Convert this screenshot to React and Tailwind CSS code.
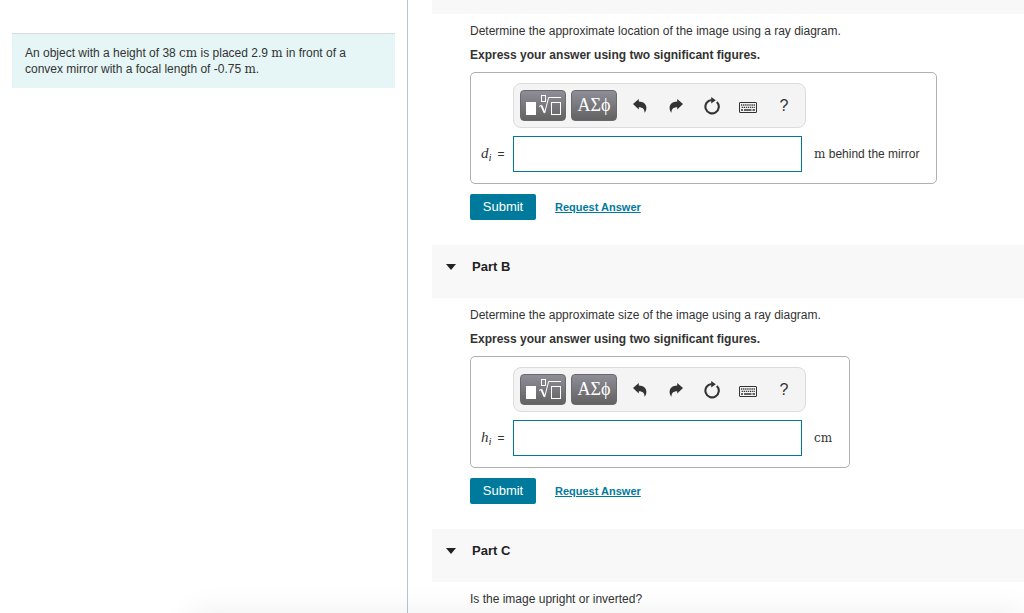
import React from "react";

function Unit({ children }) {
  return <span className="font-['DejaVu_Serif',serif] text-xs leading-none">{children}</span>;
}

function TemplateIcon() {
  return (
    <svg viewBox="0 0 36 22" className="h-[22px] w-9 shrink-0" fill="none" aria-hidden="true">
      <rect x="1" y="8" width="10" height="13" fill="#fff" />
      <rect x="16.5" y="1.5" width="4" height="6" stroke="#fff" />
      <path d="M14 12.5l2.5-1.2" stroke="#fff" />
      <path d="M16.3 11.3l3.2 7.4" stroke="#fff" strokeWidth="1.9" />
      <path d="M19.6 19.2l4-15.700H36" stroke="#fff" />
      <rect x="26.5" y="8.5" width="9" height="12" stroke="#fff" />
    </svg>
  );
}

function ArrowIcon({ flip }) {
  return (
    <svg
      viewBox="0 0 14 14"
      className={flip ? "h-3.5 w-3.5 -scale-x-100" : "h-3.5 w-3.5"}
      fill="#333"
      aria-hidden="true"
    >
      <path d="M0 5L5.8 0v2.4C10.4 2.5 13.4 5 13.4 8.8c0 1.9-.6 3.6-1.9 5 .2-3.7-1.5-5.5-5.7-5.6V10.5z" />
    </svg>
  );
}

function ResetIcon() {
  return (
    <svg viewBox="0 0 18 18" className="h-[18px] w-[18px]" fill="none" aria-hidden="true">
      <path d="M13.8 4.9A6.7 6.7 0 1 1 8.6 3" stroke="#333" strokeWidth="2.1" />
      <path d="M8.2 0l4.6 3.2-4.600 3.200z" fill="#333" />
    </svg>
  );
}

function KeyboardIcon() {
  return (
    <svg viewBox="0 0 18 11" className="h-[11px] w-[18px]" fill="none" aria-hidden="true">
      <rect x="0.5" y="0.5" width="17" height="10" rx="0.5" stroke="#333" />
      <path d="M2 3h14" stroke="#333" strokeWidth="1.4" strokeDasharray="1.3 0.8" />
      <path d="M2.6 5.4h13.4" stroke="#333" strokeWidth="1.4" strokeDasharray="1.3 0.8" />
      <path d="M2 8h2M5 8h7.5M13.5 8h2.5" stroke="#333" strokeWidth="1.4" />
    </svg>
  );
}

const DARK_BUTTON =
  "flex h-[31px] w-[46px] items-center justify-center rounded border border-[#6a6a6e] bg-linear-to-b from-[#8f8e98] to-[#626262] pb-0.5 text-white";
const TOOL_BUTTON = "flex h-8 w-9 items-center justify-center text-[#333]";

function Toolbar() {
  return (
    <div className="flex h-[45px] w-[293px] items-center rounded-lg border border-[#dcdcdc] bg-[#f4f4f4] pl-1.5">
      <button type="button" aria-label="Templates" className={DARK_BUTTON}>
        <TemplateIcon />
      </button>
      <button
        type="button"
        aria-label="Symbols"
        className={`${DARK_BUTTON} ml-[5px] font-['Liberation_Serif',serif] text-[18px] leading-none`}
      >
        ΑΣϕ
      </button>
      <div className="ml-[5px] flex">
        <button type="button" aria-label="Undo" className={TOOL_BUTTON}>
          <ArrowIcon />
        </button>
        <button type="button" aria-label="Redo" className={TOOL_BUTTON}>
          <ArrowIcon flip />
        </button>
        <button type="button" aria-label="Reset" className={TOOL_BUTTON}>
          <ResetIcon />
        </button>
        <button type="button" aria-label="Keyboard shortcuts" className={`${TOOL_BUTTON} pt-1`}>
          <KeyboardIcon />
        </button>
        <button type="button" aria-label="Help" className={`${TOOL_BUTTON} text-base`}>
          ?
        </button>
      </div>
    </div>
  );
}

function Answer({ id, symbol, unit, prompt }) {
  return (
    <section className="pt-2 pr-4 pb-[25px] pl-[38px]">
      <p className="leading-[18px]">{prompt}</p>
      <p className="mt-1.5 font-bold leading-[18px]">
        Express your answer using two significant figures.
      </p>
      <form onSubmit={(e) => e.preventDefault()}>
        <div className="mt-2 grid w-fit grid-cols-[32px_auto_auto] items-center rounded-[5px] border border-[#b0b0b0] pt-2.5 pr-[17px] pb-[11px] pl-2.5">
          <div className="col-start-2">
            <Toolbar />
          </div>
          <label htmlFor={id} className="col-start-1 mt-2 flex items-baseline whitespace-nowrap">
            <span className="font-['Liberation_Serif',serif] text-[15px] leading-none italic">
              {symbol}
            </span>
            <sub className="font-['Liberation_Serif',serif] text-[11px] leading-none italic">i</sub>
            <span className="ml-1.5">=</span>
          </label>
          <input
            id={id}
            type="text"
            className="mt-2 h-9 w-[289px] border border-[#007a9c] bg-white px-2 text-base outline-none"
          />
          <span className="mt-2 ml-2">{unit}</span>
        </div>
        <div className="mt-2.5 flex items-center gap-[19px]">
          <button
            type="submit"
            className="h-[26px] w-[66px] rounded-xs bg-[#007a9c] text-[13px] text-white"
          >
            Submit
          </button>
          <a href="#answer" className="text-[11px] font-bold text-[#007a9c] underline">
            Request Answer
          </a>
        </div>
      </form>
    </section>
  );
}

function PartHeader({ title }) {
  return (
    <h2 className="h-[53px] bg-[#f8f8f8] pt-3 pl-3.5 text-[13px] font-bold leading-[20px] text-[#222]">
      <button type="button" aria-expanded="true" className="flex items-center gap-4">
        <svg viewBox="0 0 10 6" className="h-1.5 w-2.5" fill="#222" aria-hidden="true">
          <path d="M0 0h10L5 6z" />
        </svg>
        {title}
      </button>
    </h2>
  );
}

export default function App() {
  return (
    <div className="relative flex min-h-screen overflow-hidden bg-white font-['Liberation_Sans',Arial,sans-serif] text-xs text-[#333]">
      <aside className="w-[408px] shrink-0 border-r border-[#b8c4d0] pt-[33px] pr-3 pl-3">
        <p className="border-t border-[#d8dcdc] bg-[#e6f6f6] px-[13px] py-[11px] leading-[16px]">
          An object with a height of 38 <Unit>cm</Unit> is placed 2.9 <Unit>m</Unit> in front of a
          convex mirror with a focal length of -0.75 <Unit>m</Unit>.
        </p>
      </aside>
      <main className="min-w-0 flex-1 pl-6">
        <div className="h-3.5 bg-[#f8f8f8]" />
        <Answer
          id="image-location"
          symbol="d"
          prompt="Determine the approximate location of the image using a ray diagram."
          unit={
            <>
              <Unit>m</Unit> behind the mirror
            </>
          }
        />
        <PartHeader title="Part B" />
        <Answer
          id="image-size"
          symbol="h"
          prompt="Determine the approximate size of the image using a ray diagram."
          unit={<Unit>cm</Unit>}
        />
        <PartHeader title="Part C" />
        <p className="pt-2 pl-[38px] leading-[18px]">Is the image upright or inverted?</p>
      </main>
      <div className="pointer-events-none absolute top-full right-0 left-[190px] h-10 shadow-[0_0_32px_rgba(0,0,0,0.07)]" />
    </div>
  );
}
